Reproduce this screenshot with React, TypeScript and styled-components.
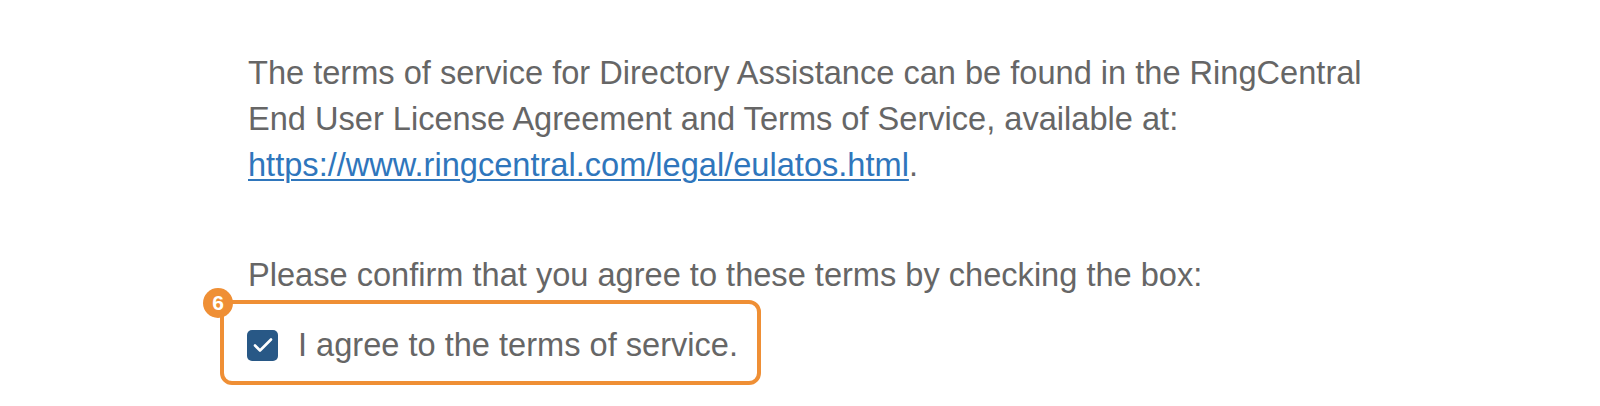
import React, { useState } from 'react';
import styled, { createGlobalStyle } from 'styled-components';

const GlobalStyle = createGlobalStyle`
  html, body {
    margin: 0;
    padding: 0;
    background: #fff;
  }
  body {
    font-family: "Liberation Sans", Arial, Helvetica, sans-serif;
  }
`;

const Page = styled.div`
  width: 1600px;
  height: 406px;
  box-sizing: border-box;
  padding: 50px 0 0 248px;
  color: #666666;
  font-size: 32.6px;
  line-height: 46px;
  overflow: hidden;
`;

const Paragraph = styled.p`
  margin: 0 0 64px;
  max-width: 1140px;
`;

const Prompt = styled.p`
  margin: 0 0 2px;
`;

const Link = styled.a`
  color: #2f76bc;
  text-decoration: underline;
  text-decoration-thickness: 2px;
  text-underline-offset: 3px;
`;

const Highlight = styled.div`
  position: relative;
  display: inline-flex;
  align-items: center;
  margin-left: -28px;
  padding: 18px 19px 13px 23px;
  border: 4px solid #ef8f35;
  border-radius: 12px;
`;

const StepBadge = styled.span`
  position: absolute;
  left: -21px;
  top: -16px;
  width: 30px;
  height: 30px;
  border-radius: 50%;
  background: #ef8f35;
  color: #fff;
  font-size: 21px;
  font-weight: bold;
  line-height: 30px;
  text-align: center;
`;

const CheckLabel = styled.label`
  display: flex;
  align-items: center;
  gap: 20px;
  cursor: pointer;
`;

const Box = styled.span<{ checked: boolean }>`
  display: flex;
  align-items: center;
  justify-content: center;
  width: 31px;
  height: 31px;
  box-sizing: border-box;
  border-radius: 5px;
  background: ${p => (p.checked ? '#285886' : '#fff')};
  border: ${p => (p.checked ? 'none' : '2px solid #999')};
`;

const App: React.FC = () => {
  const [agreed, setAgreed] = useState(true);

  return (
    <>
      <GlobalStyle />
      <Page>
        <Paragraph>
          The terms of service for Directory Assistance can be found in the RingCentral End User
          License Agreement and Terms of Service, available at:{' '}
          <Link href="#">https://www.ringcentral.com/legal/eulatos.html</Link>.
        </Paragraph>
        <Prompt>Please confirm that you agree to these terms by checking the box:</Prompt>
        <Highlight>
          <StepBadge>6</StepBadge>
          <CheckLabel onClick={() => setAgreed(!agreed)}>
            <Box checked={agreed}>
              {agreed && (
                <svg width="20" height="16" viewBox="0 0 20 16" fill="none">
                  <path d="M2 8.5l5 5L18 2.5" stroke="#fff" strokeWidth="2.6" strokeLinecap="round" strokeLinejoin="round" />
                </svg>
              )}
            </Box>
            <span>I agree to the terms of service.</span>
          </CheckLabel>
        </Highlight>
      </Page>
    </>
  );
};

export default App;
